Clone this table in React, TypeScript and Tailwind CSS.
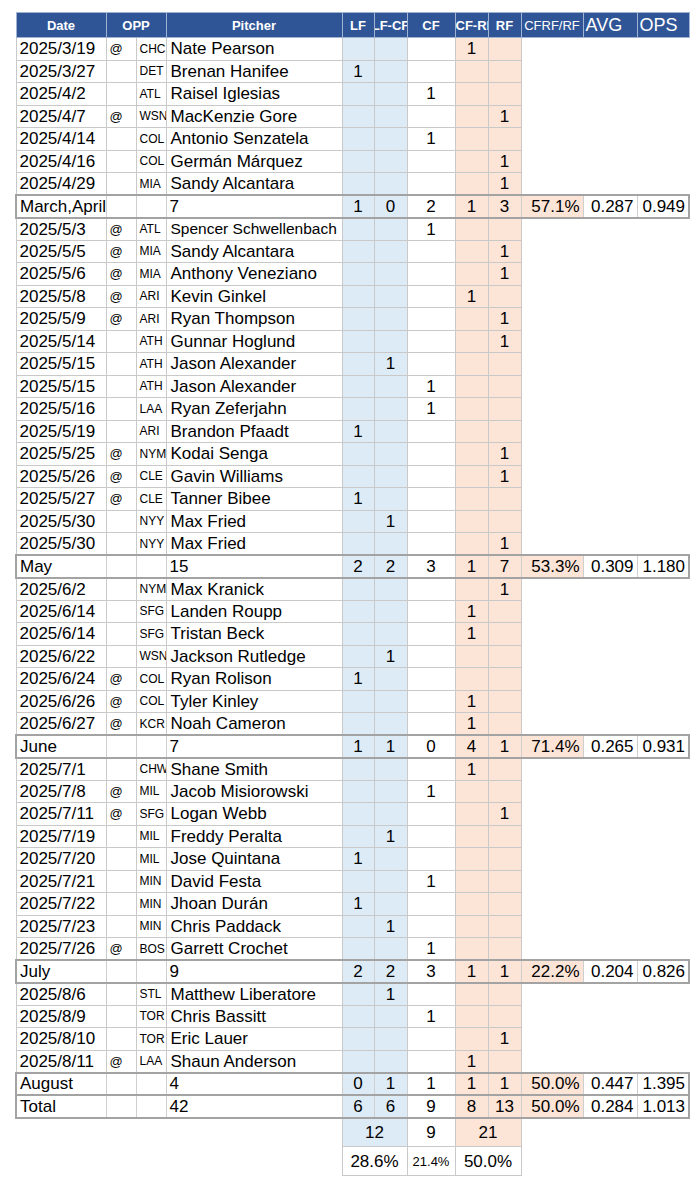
type Game = [string, boolean, string, string, number];

type Month = {
  label: string;
  count: number;
  sums: number[];
  pct: string;
  avg: string;
  ops: string;
  games: Game[];
};

const months: Month[] = [
  {
    label: "March,April",
    count: 7,
    sums: [1, 0, 2, 1, 3],
    pct: "57.1%",
    avg: "0.287",
    ops: "0.949",
    games: [
      ["2025/3/19", true, "CHC", "Nate Pearson", 3],
      ["2025/3/27", false, "DET", "Brenan Hanifee", 0],
      ["2025/4/2", false, "ATL", "Raisel Iglesias", 2],
      ["2025/4/7", true, "WSN", "MacKenzie Gore", 4],
      ["2025/4/14", false, "COL", "Antonio Senzatela", 2],
      ["2025/4/16", false, "COL", "Germán Márquez", 4],
      ["2025/4/29", false, "MIA", "Sandy Alcantara", 4],
    ],
  },
  {
    label: "May",
    count: 15,
    sums: [2, 2, 3, 1, 7],
    pct: "53.3%",
    avg: "0.309",
    ops: "1.180",
    games: [
      ["2025/5/3", true, "ATL", "Spencer Schwellenbach", 2],
      ["2025/5/5", true, "MIA", "Sandy Alcantara", 4],
      ["2025/5/6", true, "MIA", "Anthony Veneziano", 4],
      ["2025/5/8", true, "ARI", "Kevin Ginkel", 3],
      ["2025/5/9", true, "ARI", "Ryan Thompson", 4],
      ["2025/5/14", false, "ATH", "Gunnar Hoglund", 4],
      ["2025/5/15", false, "ATH", "Jason Alexander", 1],
      ["2025/5/15", false, "ATH", "Jason Alexander", 2],
      ["2025/5/16", false, "LAA", "Ryan Zeferjahn", 2],
      ["2025/5/19", false, "ARI", "Brandon Pfaadt", 0],
      ["2025/5/25", true, "NYM", "Kodai Senga", 4],
      ["2025/5/26", true, "CLE", "Gavin Williams", 4],
      ["2025/5/27", true, "CLE", "Tanner Bibee", 0],
      ["2025/5/30", false, "NYY", "Max Fried", 1],
      ["2025/5/30", false, "NYY", "Max Fried", 4],
    ],
  },
  {
    label: "June",
    count: 7,
    sums: [1, 1, 0, 4, 1],
    pct: "71.4%",
    avg: "0.265",
    ops: "0.931",
    games: [
      ["2025/6/2", false, "NYM", "Max Kranick", 4],
      ["2025/6/14", false, "SFG", "Landen Roupp", 3],
      ["2025/6/14", false, "SFG", "Tristan Beck", 3],
      ["2025/6/22", false, "WSN", "Jackson Rutledge", 1],
      ["2025/6/24", true, "COL", "Ryan Rolison", 0],
      ["2025/6/26", true, "COL", "Tyler Kinley", 3],
      ["2025/6/27", true, "KCR", "Noah Cameron", 3],
    ],
  },
  {
    label: "July",
    count: 9,
    sums: [2, 2, 3, 1, 1],
    pct: "22.2%",
    avg: "0.204",
    ops: "0.826",
    games: [
      ["2025/7/1", false, "CHW", "Shane Smith", 3],
      ["2025/7/8", true, "MIL", "Jacob Misiorowski", 2],
      ["2025/7/11", true, "SFG", "Logan Webb", 4],
      ["2025/7/19", false, "MIL", "Freddy Peralta", 1],
      ["2025/7/20", false, "MIL", "Jose Quintana", 0],
      ["2025/7/21", false, "MIN", "David Festa", 2],
      ["2025/7/22", false, "MIN", "Jhoan Durán", 0],
      ["2025/7/23", false, "MIN", "Chris Paddack", 1],
      ["2025/7/26", true, "BOS", "Garrett Crochet", 2],
    ],
  },
  {
    label: "August",
    count: 4,
    sums: [0, 1, 1, 1, 1],
    pct: "50.0%",
    avg: "0.447",
    ops: "1.395",
    games: [
      ["2025/8/6", false, "STL", "Matthew Liberatore", 1],
      ["2025/8/9", false, "TOR", "Chris Bassitt", 2],
      ["2025/8/10", false, "TOR", "Eric Lauer", 4],
      ["2025/8/11", true, "LAA", "Shaun Anderson", 3],
    ],
  },
];

const posBg = [
  "bg-[#ddebf7]",
  "bg-[#ddebf7]",
  "bg-white",
  "bg-[#fce4d6]",
  "bg-[#fce4d6]",
];

const cell = "border border-[#c9c9c9] whitespace-nowrap overflow-hidden p-0";
const sumCell =
  "border-x border-x-[#cfcfcf] border-y-2 border-y-[#a3a3a3] whitespace-nowrap overflow-hidden p-0";
const head =
  "border border-[#9fb3d3] bg-[#2f5597] text-white whitespace-nowrap overflow-hidden p-0";

// long names are shrunk to fit, like the sheet does
const GameRow = ({ g }: { g: Game }) => (
  <tr className="h-[22.5px]">
    <td className={`${cell} pl-[3px]`}>{g[0]}</td>
    <td className={`${cell} pl-[3px] text-[13px]`}>{g[1] ? "@" : ""}</td>
    <td className={`${cell} pl-[3px] text-[12px]`}>{g[2]}</td>
    <td
      className={`${cell} pl-[4px] ${g[3].length > 19 ? "text-[15.5px]" : ""}`}
    >
      {g[3]}
    </td>
    {posBg.map((bg, i) => (
      <td key={i} className={`${cell} ${bg} text-center`}>
        {g[4] === i ? "1" : ""}
      </td>
    ))}
    <td />
    <td />
    <td />
  </tr>
);

const SumRow = ({
  label,
  count,
  sums,
  pct,
  avg,
  ops,
}: Omit<Month, "games">) => (
  <tr className="h-[22.5px]">
    <td className={`${sumCell} border-l-2 border-l-[#a3a3a3] pl-[3px]`}>
      {label}
    </td>
    <td className={sumCell} />
    <td className={sumCell} />
    <td className={`${sumCell} pl-[3px]`}>{count}</td>
    {sums.map((n, i) => (
      <td key={i} className={`${sumCell} ${posBg[i]} text-center`}>
        {n}
      </td>
    ))}
    <td className={`${sumCell} bg-[#fce4d6] text-right pr-[3px]`}>{pct}</td>
    <td className={`${sumCell} text-right pr-[3px]`}>{avg}</td>
    <td
      className={`${sumCell} border-r-2 border-r-[#a3a3a3] text-right pr-[3px]`}
    >
      {ops}
    </td>
  </tr>
);

const MonthBlock = ({ m }: { m: Month }) => (
  <>
    {m.games.map((g, i) => (
      <GameRow key={i} g={g} />
    ))}
    <SumRow
      label={m.label}
      count={m.count}
      sums={m.sums}
      pct={m.pct}
      avg={m.avg}
      ops={m.ops}
    />
  </>
);

export default function App() {
  return (
    <div className="min-h-screen bg-white pl-[15px] pt-[12px] font-['Liberation_Sans',Arial,sans-serif] text-[17px] leading-none text-black">
      <table className="w-[673px] table-fixed border-collapse">
        <colgroup>
          <col className="w-[90px]" />
          <col className="w-[30px]" />
          <col className="w-[30px]" />
          <col className="w-[176px]" />
          <col className="w-[32px]" />
          <col className="w-[33px]" />
          <col className="w-[48px]" />
          <col className="w-[33px]" />
          <col className="w-[33px]" />
          <col className="w-[62px]" />
          <col className="w-[54px]" />
          <col className="w-[52px]" />
        </colgroup>
        <thead>
          <tr className="h-[25px] text-[13px] font-bold">
            <th className={`${head} text-center`}>Date</th>
            <th colSpan={2} className={`${head} text-center`}>
              OPP
            </th>
            <th className={`${head} text-center`}>Pitcher</th>
            <th className={`${head} text-center`}>LF</th>
            <th className={head}>
              <div className="flex justify-center">
                <span className="shrink-0">LF-CF</span>
              </div>
            </th>
            <th className={`${head} text-center`}>CF</th>
            <th className={`${head} text-left`}>CF-RF</th>
            <th className={`${head} text-center`}>RF</th>
            <th className={`${head} text-center font-normal`}>CFRF/RF</th>
            <th className={`${head} text-left pl-[2px] text-[18px] font-normal`}>
              AVG
            </th>
            <th className={`${head} text-left pl-[2px] text-[18px] font-normal`}>
              OPS
            </th>
          </tr>
        </thead>
        <tbody>
          {months.map((m) => (
            <MonthBlock key={m.label} m={m} />
          ))}
          <SumRow
            label="Total"
            count={42}
            sums={[6, 6, 9, 8, 13]}
            pct="50.0%"
            avg="0.284"
            ops="1.013"
          />
          <tr className="h-[29px]">
            <td colSpan={4} />
            <td colSpan={2} className={`${cell} bg-[#ddebf7] text-center`}>
              12
            </td>
            <td className={`${cell} text-center`}>9</td>
            <td colSpan={2} className={`${cell} bg-[#fce4d6] text-center`}>
              21
            </td>
            <td colSpan={3} />
          </tr>
          <tr className="h-[29px]">
            <td colSpan={4} />
            <td colSpan={2} className={`${cell} text-center`}>
              28.6%
            </td>
            <td className={`${cell} text-center text-[13px]`}>21.4%</td>
            <td colSpan={2} className={`${cell} text-center`}>
              50.0%
            </td>
            <td colSpan={3} />
          </tr>
        </tbody>
      </table>
    </div>
  );
}
